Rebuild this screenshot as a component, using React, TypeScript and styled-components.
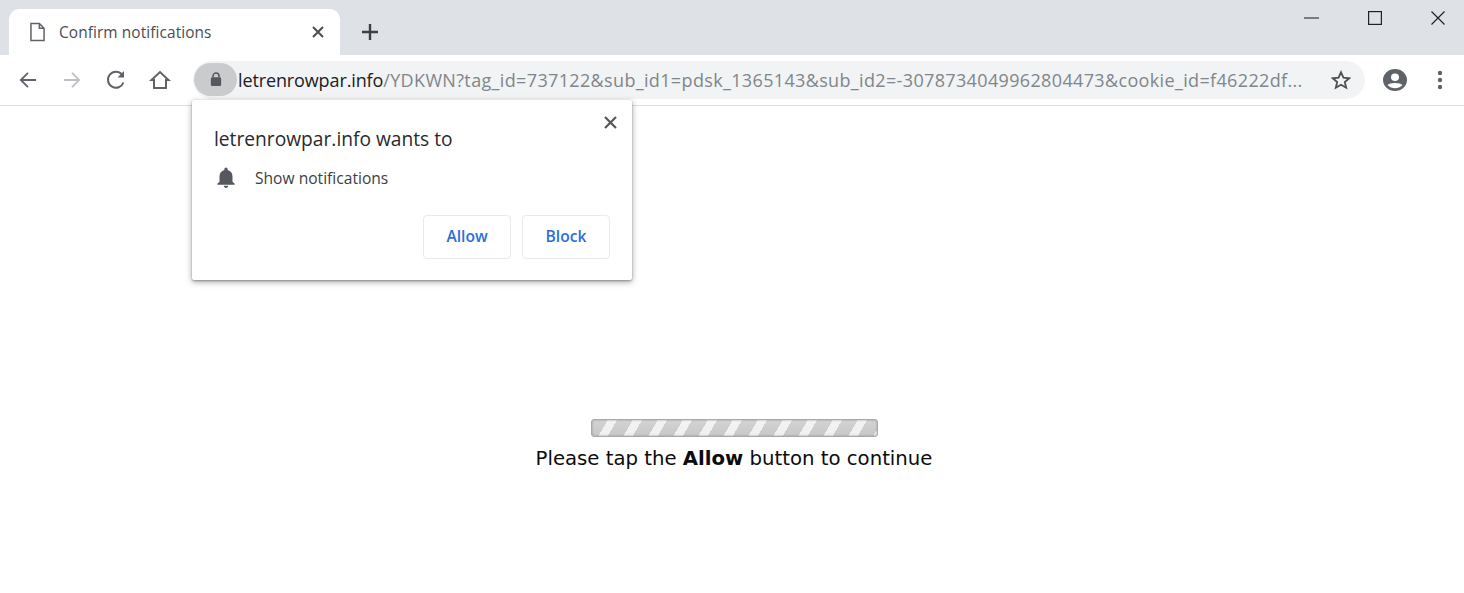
import React from "react";
import styled, { createGlobalStyle } from "styled-components";

const Global = createGlobalStyle`
  html, body { margin: 0; padding: 0; background: #fff; overflow: hidden; }
  body { font-family: "Open Sans", "Noto Sans", sans-serif; }
`;

const Page = styled.div`
  width: 1464px;
  height: 593px;
  display: flex;
  flex-direction: column;
  position: relative;
`;

const TabStrip = styled.div`
  height: 55px;
  flex: none;
  background: #dee1e6;
  display: flex;
  align-items: flex-end;
  padding-left: 9px;
`;

const Tab = styled.div`
  width: 331px;
  height: 46px;
  box-sizing: border-box;
  background: #fff;
  border-radius: 10px 10px 0 0;
  display: flex;
  align-items: center;
  padding: 0 15px 0 21px;
  position: relative;
`;

const TabTitle = styled.span`
  flex: 1;
  margin-left: 14px;
  font-size: 15.4px;
  color: #4a4d51;
  letter-spacing: 0.1px;
  white-space: nowrap;
`;

const NewTab = styled.div`
  margin-left: 21px;
  height: 46px;
  display: flex;
  align-items: center;
`;

const WindowControls = styled.div`
  margin-left: auto;
  align-self: flex-start;
  display: flex;
  height: 36px;
  align-items: center;
  padding-right: 19px;
  gap: 49px;
`;

const Toolbar = styled.div`
  height: 51px;
  flex: none;
  box-sizing: border-box;
  border-bottom: 1px solid #dadce0;
  background: #fff;
  display: flex;
  align-items: center;
  padding: 0 14px 1px 17px;
`;

const NavIcons = styled.div`
  display: flex;
  align-items: center;
  gap: 22px;
  width: 176px;
`;

const AddressBar = styled.div`
  width: 1172px;
  height: 38px;
  flex: none;
  background: #f1f3f4;
  border-radius: 19px;
  display: flex;
  align-items: center;
  padding: 0 14px 0 1px;
  box-sizing: border-box;
`;

const LockChip = styled.div`
  width: 43px;
  height: 33px;
  flex: none;
  border-radius: 17px;
  background: #c9cbcd;
  display: flex;
  align-items: center;
  justify-content: center;
  margin-right: 1px;
`;

const Url = styled.div`
  flex: 1;
  min-width: 0;
  font-size: 18px;
  letter-spacing: 0.35px;
  color: #80868b;
  white-space: nowrap;
`;

const Host = styled.span`
  color: #202124;
  letter-spacing: -0.12px;
`;

const RightIcons = styled.div`
  display: flex;
  align-items: center;
  margin-left: 18px;
  gap: 30px;
`;

const Content = styled.main`
  flex: 1;
  display: flex;
  flex-direction: column;
  align-items: center;
  padding: 313px 0 0 4px;
`;

const Progress = styled.div`
  width: 287px;
  height: 18px;
  box-sizing: border-box;
  border: 1px solid #a9a9a9;
  border-radius: 3px;
  background:
    linear-gradient(rgba(255, 255, 255, 0.2), rgba(255, 255, 255, 0)),
    repeating-linear-gradient(120deg, #c8c8c8 0 13.6px, #f0f0f0 13.6px 21.65px);
  box-shadow: inset 0 0 2px #8e8e8e;
`;

const Message = styled.p`
  margin: 8px 0 0;
  font-family: "DejaVu Sans", Verdana, sans-serif;
  font-size: 19.7px;
  line-height: 28px;
  color: #0c0c0c;
  white-space: nowrap;
`;

const Popup = styled.div`
  position: absolute;
  left: 192px;
  top: 100px;
  width: 440px;
  height: 180px;
  box-sizing: border-box;
  background: #fff;
  border-radius: 2px;
  box-shadow: 0 1px 2px rgba(60, 64, 67, 0.4), 0 2px 6px rgba(60, 64, 67, 0.45);
  padding: 25px 22px 21px;
  display: flex;
  flex-direction: column;
`;

const PopupClose = styled.div`
  position: absolute;
  top: 15px;
  right: 14px;
  display: flex;
`;

const PopupTitle = styled.div`
  font-size: 19.2px;
  line-height: 28px;
  color: #282a2d;
  white-space: nowrap;
`;

const Permission = styled.div`
  display: flex;
  align-items: center;
  margin: 12px 0 0 -1px;
  font-size: 15.6px;
  color: #3c4043;
  gap: 16px;
`;

const Buttons = styled.div`
  margin-top: auto;
  display: flex;
  justify-content: flex-end;
  gap: 11px;
`;

const Button = styled.div`
  width: 88px;
  height: 44px;
  box-sizing: border-box;
  border: 1px solid #e8eaed;
  border-radius: 4px;
  display: flex;
  align-items: center;
  justify-content: center;
  padding-bottom: 2px;
  font-size: 15.6px;
  font-weight: 600;
  color: #2a6fdb;
`;

const stroke = { fill: "none", strokeWidth: 2 };

export default function App() {
  return (
    <Page>
      <Global />
      <TabStrip>
        <Tab>
          <svg width="15" height="20" viewBox="0 0 16 20">
            <path d="M1 1h9l5 5v13H1z M10 1v5h5" {...stroke} stroke="#5f6368" strokeWidth="1.6" />
          </svg>
          <TabTitle>Confirm notifications</TabTitle>
          <svg width="14" height="14" viewBox="0 0 14 14">
            <path d="M2 2l10 10M12 2L2 12" {...stroke} stroke="#4a4d51" />
          </svg>
        </Tab>
        <NewTab>
          <svg width="18" height="18" viewBox="0 0 18 18">
            <path d="M9 1v16M1 9h16" {...stroke} stroke="#3c4043" strokeWidth="2.4" />
          </svg>
        </NewTab>
        <WindowControls>
          <svg width="15" height="2" viewBox="0 0 15 2">
            <path d="M0 1h15" stroke="#3a3a3a" strokeWidth="1.2" />
          </svg>
          <svg width="14" height="14" viewBox="0 0 14 14">
            <rect x="0.6" y="0.6" width="12.8" height="12.8" fill="none" stroke="#222" strokeWidth="1.2" />
          </svg>
          <svg width="14" height="14" viewBox="0 0 14 14">
            <path d="M0.5 0.5l13 13M13.5 0.5l-13 13" fill="none" stroke="#222" strokeWidth="1.2" />
          </svg>
        </WindowControls>
      </TabStrip>
      <Toolbar>
        <NavIcons>
          <svg width="22" height="18" viewBox="0 0 22 20">
            <path d="M20 10H3M11 2l-8 8 8 8" {...stroke} stroke="#5f6368" />
          </svg>
          <svg width="22" height="18" viewBox="0 0 22 20">
            <path d="M2 10h17M11 2l8 8-8 8" {...stroke} stroke="#bdc1c6" />
          </svg>
          <svg width="22" height="22" viewBox="0 0 22 22">
            <path d="M18.500 13.500A8 8 0 1 1 17 5.500" {...stroke} stroke="#5f6368" />
            <path d="M19 2v6.500h-6.500z" fill="#5f6368" />
          </svg>
          <svg width="22" height="20" viewBox="0 0 22 20">
            <path d="M2.500 10L11 2l8.500 8H17v8H5v-8z" {...stroke} stroke="#5f6368" />
          </svg>
        </NavIcons>
        <AddressBar>
          <LockChip>
            <svg width="12" height="15" viewBox="0 0 14 17">
              <path d="M3.500 6V4.500a3.500 3.500 0 0 1 7 0V6" {...stroke} stroke="#55585c" strokeWidth="1.8" />
              <rect x="1" y="6" width="12" height="10" rx="1.500" fill="#55585c" />
            </svg>
          </LockChip>
          <Url>
            <Host>letrenrowpar.info</Host>
            /YDKWN?tag_id=737122&amp;sub_id1=pdsk_1365143&amp;sub_id2=-3078734049962804473&amp;cookie_id=f46222df...
          </Url>
          <svg width="20" height="20" viewBox="0 0 22 21">
            <path d="M11 2l2.700 6 6.300.6-4.800 4.200 1.500 6.200L11 15.700 5.300 19l1.500-6.200L2 8.600 8.300 8z" {...stroke} stroke="#4d5054" />
          </svg>
        </AddressBar>
        <RightIcons>
          <svg width="24" height="22" viewBox="0 0 24 24" preserveAspectRatio="none">
            <circle cx="12" cy="12" r="12" fill="#5f6368" />
            <circle cx="12" cy="9" r="4" fill="#fff" />
            <path d="M4.500 17.500c2-3 13-3 15 0-2 2.500-5 3.500-7.500 3.500s-5.500-1-7.500-3.500z" fill="#fff" />
          </svg>
          <svg width="6" height="20" viewBox="0 0 6 20">
            <circle cx="3" cy="3" r="2.200" fill="#5f6368" />
            <circle cx="3" cy="10" r="2.200" fill="#5f6368" />
            <circle cx="3" cy="17" r="2.200" fill="#5f6368" />
          </svg>
        </RightIcons>
      </Toolbar>
      <Content>
        <Progress />
        <Message>
          Please tap the <b>Allow</b> button to continue
        </Message>
      </Content>
      <Popup>
        <PopupClose>
          <svg width="15" height="15" viewBox="0 0 15 15">
            <path d="M2 2l11 11M13 2L2 13" {...stroke} stroke="#55585c" strokeWidth="2.200" />
          </svg>
        </PopupClose>
        <PopupTitle>letrenrowpar.info wants to</PopupTitle>
        <Permission>
          <svg width="26" height="25" viewBox="0 0 24 24" preserveAspectRatio="none">
            <path
              fill="#55585c"
              d="M12 22c1.100 0 2-.9 2-2h-4c0 1.100.9 2 2 2zm6-6v-5c0-3.100-1.600-5.600-4.500-6.300V4c0-.8-.7-1.500-1.500-1.500s-1.500.7-1.500 1.500v.7C7.600 5.400 6 7.900 6 11v5l-2 2v1h16v-1l-2-2z"
            />
          </svg>
          Show notifications
        </Permission>
        <Buttons>
          <Button>Allow</Button>
          <Button>Block</Button>
        </Buttons>
      </Popup>
    </Page>
  );
}
